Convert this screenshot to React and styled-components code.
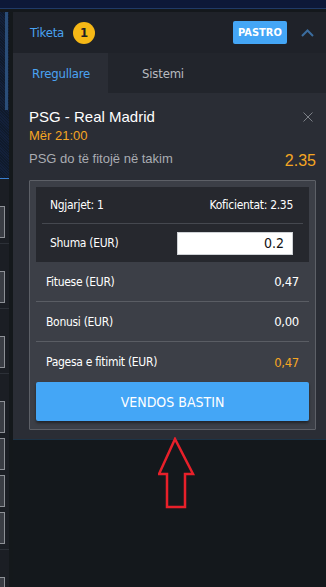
import styled, { createGlobalStyle } from 'styled-components'

const Global = createGlobalStyle`
  html, body {
    margin: 0;
    padding: 0;
    background: #0f1316;
  }
  * { box-sizing: border-box; }
`

const Page = styled.div`
  width: 326px;
  height: 587px;
  overflow: hidden;
  background: #0f1316;
  display: flex;
  flex-direction: column;
`

const TopBar = styled.div`
  height: 9px;
  flex-shrink: 0;
  background: #0d1838;
  border-bottom: 1px solid #203a66;
`

const Body = styled.div`
  flex: 1;
  display: flex;
  padding-top: 3px;
  background: #14181c;
`

const Sidebar = styled.div`
  width: 9px;
  display: flex;
  flex-direction: column;
  background: #1b1e24;
`

const ScrollArea = styled.div`
  position: relative;
  height: 167px;
  background: repeating-linear-gradient(45deg, #0f1a2b 0 1px, #13203a 1px 2px);
  border-bottom: 1px solid #3a7fd0;
`

const Thumb = styled.div`
  position: absolute;
  left: 5px;
  top: 0;
  width: 3px;
  height: 98px;
  background: #2a4d78;
`

const SideGroup = styled.div`
  display: flex;
  flex-direction: column;
  gap: 5px;
  padding: 27px 0 5px;
  border-bottom: 1px solid #2c3037;
`

const SideBtn = styled.div`
  width: 5px;
  height: 32px;
  background: #3a3d44;
  border: 1px solid #8d9096;
  border-left: none;
`

const Divider = styled.div`
  width: 4px;
  background: #14181b;
`

const Column = styled.div`
  width: 313px;
  display: flex;
  flex-direction: column;
`

const Panel = styled.div`
  display: flex;
  flex-direction: column;
  background: #2a2d35;
  border-bottom: 1px solid #1c3346;
  font-family: 'DejaVu Sans Condensed', Roboto, sans-serif;
`

const Header = styled.div`
  height: 41px;
  display: flex;
  align-items: center;
  padding: 0 12px 0 17px;
  background: #1f2229;
`

const Title = styled.span`
  color: #4aa3f2;
  font-size: 13px;
  letter-spacing: -0.2px;
`

const Badge = styled.span`
  width: 22px;
  height: 22px;
  margin-left: 9px;
  border-radius: 50%;
  background: #f6b816;
  color: #1d1f24;
  font-size: 13px;
  font-weight: bold;
  display: flex;
  align-items: center;
  justify-content: center;
`

const ClearBtn = styled.button`
  margin-left: auto;
  width: 54px;
  height: 23px;
  border: 0;
  border-radius: 2px;
  background: #44a6f6;
  color: #fff;
  font-family: inherit;
  font-size: 11px;
  font-weight: bold;
  padding: 0;
`

const Collapse = styled.span`
  margin-left: 14px;
  display: flex;
`

const Tabs = styled.div`
  height: 40px;
  display: flex;
  background: #22252c;
`

const Tab = styled.div`
  display: flex;
  align-items: center;
  padding: 0 ${(p) => (p.$active ? '18px' : '0')} 0 19px;
  margin-right: ${(p) => (p.$active ? '15px' : '0')};
  background: ${(p) => (p.$active ? '#2a2d35' : 'transparent')};
  color: ${(p) => (p.$active ? '#4aa3f2' : '#b8bbc0')};
  font-size: 13px;
  letter-spacing: -0.2px;
`

const Match = styled.div`
  padding: 15px 10px 10px 16px;
  font-family: 'Liberation Sans', Arial, sans-serif;
`

const MatchTop = styled.div`
  display: flex;
  justify-content: space-between;
  align-items: flex-start;
`

const Teams = styled.div`
  color: #fff;
  font-size: 15px;
  line-height: 18px;
`

const Time = styled.div`
  color: #f5a623;
  font-size: 13px;
  line-height: 16px;
  margin-top: 2px;
`

const Close = styled.span`
  display: flex;
  margin: 4px 3px 0 0;
`

const Pick = styled.div`
  display: flex;
  justify-content: space-between;
  align-items: flex-end;
  margin-top: 7px;
`

const PickName = styled.span`
  color: #a9acb2;
  font-size: 13px;
  line-height: 16px;
  margin-bottom: 3px;
`

const Odds = styled.span`
  color: #f5a623;
  font-size: 16px;
  line-height: 18px;
`

const Slip = styled.div`
  margin: 0 10px 9px 16px;
  padding: 6px 6px 8px;
  background: #3c3f47;
  border: 1px solid #5d6067;
  border-radius: 1px;
`

const Inner = styled.div`
  background: #26282e;
  padding: 0 6px;
`

const InnerRow = styled.div`
  height: ${(p) => p.$h}px;
  display: flex;
  align-items: center;
  justify-content: space-between;
  padding: 0 10px 0 8px;
  color: #fff;
  font-size: 12px;
  letter-spacing: -0.3px;
  border-bottom: ${(p) => (p.$line ? '1px solid #45484f' : 'none')};
`

const Amount = styled.input`
  width: 116px;
  height: 23px;
  border: 1px solid #cfd2d6;
  background: #fff;
  text-align: right;
  padding: 0 8px;
  font-family: inherit;
  font-size: 14px;
  color: #111;
  outline: none;
`

const SumRow = styled.div`
  height: 40px;
  display: flex;
  align-items: center;
  justify-content: space-between;
  padding: 0 10px;
  color: #fff;
  font-size: 12px;
  letter-spacing: -0.3px;
  border-bottom: ${(p) => (p.$line ? '1px solid #5a5d64' : 'none')};
`

const Value = styled.span`
  color: ${(p) => p.color || '#fff'};
  font-size: 13px;
`

const PlaceBtn = styled.button`
  width: 100%;
  height: 39px;
  border: 0;
  border-radius: 2px;
  background: #44a6f6;
  color: #fff;
  font-family: inherit;
  font-size: 14px;
  box-shadow: 0 2px 3px rgba(0, 0, 0, 0.45);
  padding: 0;
`

const ArrowWrap = styled.div`
  padding: 0 0 0 145px;
  margin-top: -3px;
`

const Chevron = () => (
  <svg width="13" height="8" viewBox="0 0 13 8">
    <path d="M1 7 L6.5 1.5 L12 7" fill="none" stroke="#3b6d9f" strokeWidth="2" />
  </svg>
)

const CloseIcon = () => (
  <svg width="10" height="10" viewBox="0 0 10 10">
    <path d="M0.5 0.5 L9.5 9.5 M9.5 0.5 L0.5 9.5" stroke="#7c8087" strokeWidth="1" />
  </svg>
)

const Arrow = () => (
  <svg width="40" height="72" viewBox="0 0 40 72">
    <path
      d="M17 2 L1 37 L9 37 L9 70 L27 70 L27 37 L35 37 Z"
      fill="none"
      stroke="#e8202a"
      strokeWidth="2.5"
      strokeLinejoin="miter"
    />
  </svg>
)

const App = () => {
  return (
    <Page>
      <Global />
      <TopBar />
      <Body>
        <Sidebar>
          <ScrollArea>
            <Thumb />
          </ScrollArea>
          <SideGroup>
            <SideBtn />
          </SideGroup>
          <SideGroup>
            <SideBtn />
          </SideGroup>
          <SideGroup>
            <SideBtn />
          </SideGroup>
          <SideGroup>
            <SideBtn />
            <SideBtn />
            <SideBtn />
            <SideBtn />
          </SideGroup>
          <SideGroup>
            <SideBtn />
          </SideGroup>
        </Sidebar>
        <Divider />
        <Column>
          <Panel>
            <Header>
              <Title>Tiketa</Title>
              <Badge>1</Badge>
              <ClearBtn>PASTRO</ClearBtn>
              <Collapse>
                <Chevron />
              </Collapse>
            </Header>
            <Tabs>
              <Tab $active>Rregullare</Tab>
              <Tab>Sistemi</Tab>
            </Tabs>
            <Match>
              <MatchTop>
                <div>
                  <Teams>PSG - Real Madrid</Teams>
                  <Time>Mër 21:00</Time>
                </div>
                <Close>
                  <CloseIcon />
                </Close>
              </MatchTop>
              <Pick>
                <PickName>PSG do të fitojë në takim</PickName>
                <Odds>2.35</Odds>
              </Pick>
            </Match>
            <Slip>
              <Inner>
                <InnerRow $h={37} $line>
                  <span>Ngjarjet: 1</span>
                  <span>Koficientat: 2.35</span>
                </InnerRow>
                <InnerRow $h={38}>
                  <span>Shuma (EUR)</span>
                  <Amount defaultValue="0.2" />
                </InnerRow>
              </Inner>
              <SumRow $line>
                <span>Fituese (EUR)</span>
                <Value>0,47</Value>
              </SumRow>
              <SumRow $line>
                <span>Bonusi (EUR)</span>
                <Value>0,00</Value>
              </SumRow>
              <SumRow>
                <span>Pagesa e fitimit (EUR)</span>
                <Value color="#f5a623">0,47</Value>
              </SumRow>
              <PlaceBtn>VENDOS BASTIN</PlaceBtn>
            </Slip>
          </Panel>
          <ArrowWrap>
            <Arrow />
          </ArrowWrap>
        </Column>
      </Body>
    </Page>
  )
}

export default App
